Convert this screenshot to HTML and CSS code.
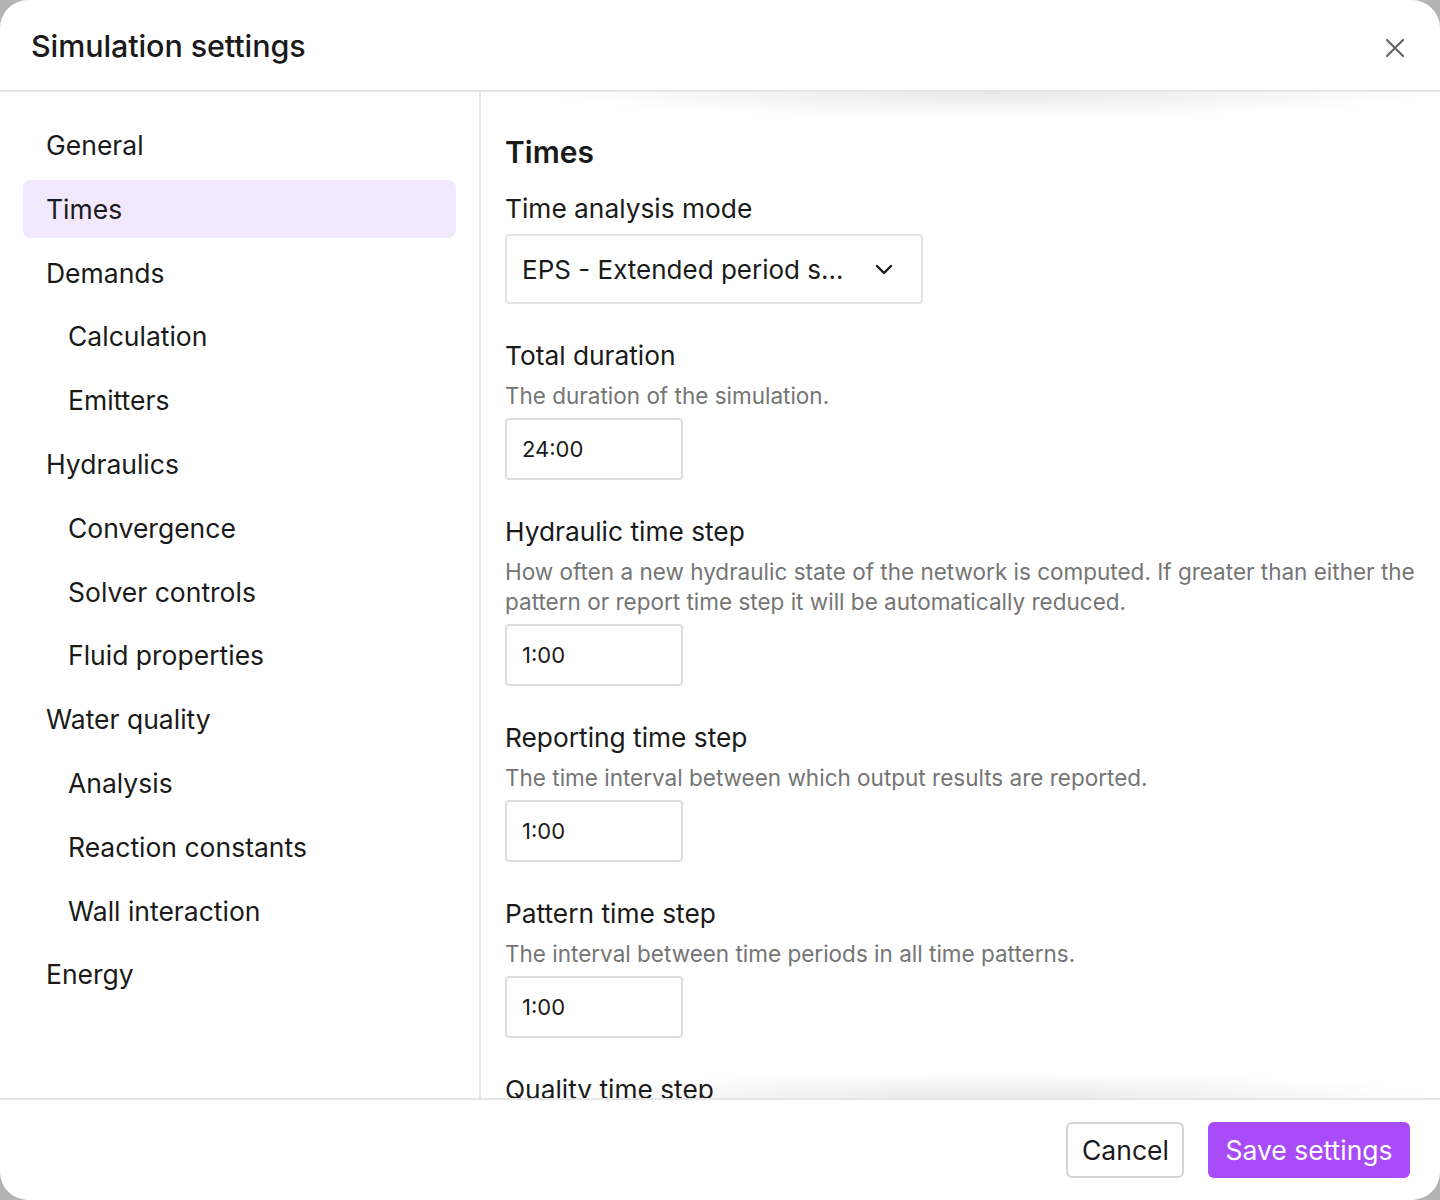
FILE: index.html
```html
<!DOCTYPE html>
<html lang="en">
<head>
    <meta charset="UTF-8">
    <meta name="viewport" content="width=device-width, initial-scale=1.0">
    <title>Simulation settings</title>
    <link rel="stylesheet" href="styles.css">
</head>
<body>
    <div class="dialog">
        <div class="dialog-header">
            <h1>Simulation settings</h1>
            <button class="close-btn" aria-label="Close">
                <svg width="20" height="20" viewBox="0 0 20 20" fill="none" stroke="#666" stroke-width="2.2" stroke-linecap="round">
                    <path d="M2 2 L18 18 M18 2 L2 18"/>
                </svg>
            </button>
        </div>

        <div class="dialog-body">
            <nav class="sidebar">
                <a class="nav-item">General</a>
                <a class="nav-item active">Times</a>
                <a class="nav-item">Demands</a>
                <a class="nav-item sub">Calculation</a>
                <a class="nav-item sub">Emitters</a>
                <a class="nav-item">Hydraulics</a>
                <a class="nav-item sub">Convergence</a>
                <a class="nav-item sub">Solver controls</a>
                <a class="nav-item sub">Fluid properties</a>
                <a class="nav-item">Water quality</a>
                <a class="nav-item sub">Analysis</a>
                <a class="nav-item sub">Reaction constants</a>
                <a class="nav-item sub">Wall interaction</a>
                <a class="nav-item">Energy</a>
            </nav>

            <div class="content-wrap">
                <div class="content">
                    <h2>Times</h2>

                    <div class="field">
                        <label>Time analysis mode</label>
                        <div class="select">
                            <span>EPS - Extended period s...</span>
                            <svg width="18" height="12" viewBox="0 0 18 12" fill="none" stroke="#1a1a1a" stroke-width="2.4" stroke-linecap="round" stroke-linejoin="round">
                                <path d="M2 3 L9 10 L16 3"/>
                            </svg>
                        </div>
                    </div>

                    <div class="field">
                        <label>Total duration</label>
                        <p class="desc">The duration of the simulation.</p>
                        <input type="text" class="text-input" value="24:00">
                    </div>

                    <div class="field">
                        <label>Hydraulic time step</label>
                        <p class="desc">How often a new hydraulic state of the network is computed. If greater than either the pattern or report time step it will be automatically reduced.</p>
                        <input type="text" class="text-input" value="1:00">
                    </div>

                    <div class="field">
                        <label>Reporting time step</label>
                        <p class="desc">The time interval between which output results are reported.</p>
                        <input type="text" class="text-input" value="1:00">
                    </div>

                    <div class="field">
                        <label>Pattern time step</label>
                        <p class="desc">The interval between time periods in all time patterns.</p>
                        <input type="text" class="text-input" value="1:00">
                    </div>

                    <div class="field">
                        <label>Quality time step</label>
                    </div>
                </div>
            </div>
        </div>

        <div class="dialog-footer">
            <button class="btn btn-secondary">Cancel</button>
            <button class="btn btn-primary">Save settings</button>
        </div>
    </div>
</body>
</html>
```

FILE: styles.css
```css
html, body {
    margin: 0;
    padding: 0;
}
body {
    font-family: Inter, "Noto Sans", sans-serif;
    background-color: #b3b3b3;
    color: #1a1a1a;
}
.dialog {
    width: 1440px;
    height: 1200px;
    background-color: white;
    border-radius: 28px;
    display: flex;
    flex-direction: column;
    overflow: hidden;
}
.dialog-header {
    height: 90px;
    flex-shrink: 0;
    display: flex;
    align-items: center;
    justify-content: space-between;
    padding: 0 35px 0 31px;
    border-bottom: 2px solid #e6e6e6;
}
.dialog-header h1 {
    margin: 0;
    font-size: 30.5px;
    font-weight: 550;
    letter-spacing: -0.1px;
}
.close-btn {
    background: none;
    border: none;
    padding: 0;
    margin-top: 6px;
    display: flex;
    cursor: pointer;
}
.dialog-body {
    flex: 1;
    display: flex;
    min-height: 0;
}
.sidebar {
    width: 433px;
    flex-shrink: 0;
    padding: 24px 23px 0 23px;
    border-right: 2px solid #e6e6e6;
    display: flex;
    flex-direction: column;
    gap: 5.8px;
}
.nav-item {
    height: 58px;
    display: flex;
    align-items: center;
    padding-left: 23px;
    font-size: 26.5px;
    border-radius: 8px;
    cursor: pointer;
}
.nav-item.sub {
    padding-left: 45px;
}
.nav-item.active {
    background-color: #f1e8fd;
}
.content-wrap {
    flex: 1;
    position: relative;
    overflow: hidden;
}
.content-wrap::before,
.content-wrap::after {
    content: "";
    position: absolute;
    left: 60px;
    right: 0;
    height: 26px;
    pointer-events: none;
}
.content-wrap::before {
    top: 0;
    background: radial-gradient(ellipse 50% 100% at 50% 0%, rgba(0,0,0,0.09), rgba(0,0,0,0) 100%);
}
.content-wrap::after {
    bottom: 0;
    background: radial-gradient(ellipse 50% 100% at 50% 100%, rgba(0,0,0,0.09), rgba(0,0,0,0) 100%);
}
.content {
    padding: 40px 24px 0 24px;
}
.content h2 {
    margin: 0 0 19px 0;
    font-size: 30px;
    line-height: 40px;
    font-weight: 600;
}
.field {
    margin-bottom: 34px;
}
.field label {
    display: block;
    font-size: 26.3px;
    line-height: 36px;
    margin-bottom: 7px;
}
.desc {
    margin: 0 0 7px 0;
    font-size: 22.5px;
    line-height: 30px;
    color: #757575;
}
.select {
    width: 371px;
    height: 66px;
    border: 2px solid #e3e3e3;
    border-radius: 4px;
    display: flex;
    align-items: center;
    justify-content: space-between;
    padding: 0 28px 0 15px;
    font-size: 26px;
    margin-top: 7px;
}
.text-input {
    display: block;
    width: 144px;
    height: 58px;
    box-sizing: content-box;
    padding: 0 15px;
    border: 2px solid #dedede;
    border-radius: 4px;
    font-family: Inter, "Noto Sans", sans-serif;
    font-size: 22px;
    color: #1a1a1a;
    outline: none;
}
.dialog-footer {
    height: 102px;
    flex-shrink: 0;
    border-top: 2px solid #e6e6e6;
    display: flex;
    justify-content: flex-end;
    align-items: flex-start;
    gap: 24px;
    padding: 22px 30px 0 0;
    box-sizing: border-box;
}
.btn {
    height: 56px;
    font-family: Inter, "Noto Sans", sans-serif;
    font-size: 26.5px;
    border-radius: 6px;
    padding: 0 14px;
    cursor: pointer;
}
.btn-secondary {
    width: 118px;
    background-color: white;
    border: 2px solid #d4d4d4;
    color: #1a1a1a;
}
.btn-primary {
    width: 202px;
    background-color: #a84cf9;
    border: none;
    color: white;
}
```
